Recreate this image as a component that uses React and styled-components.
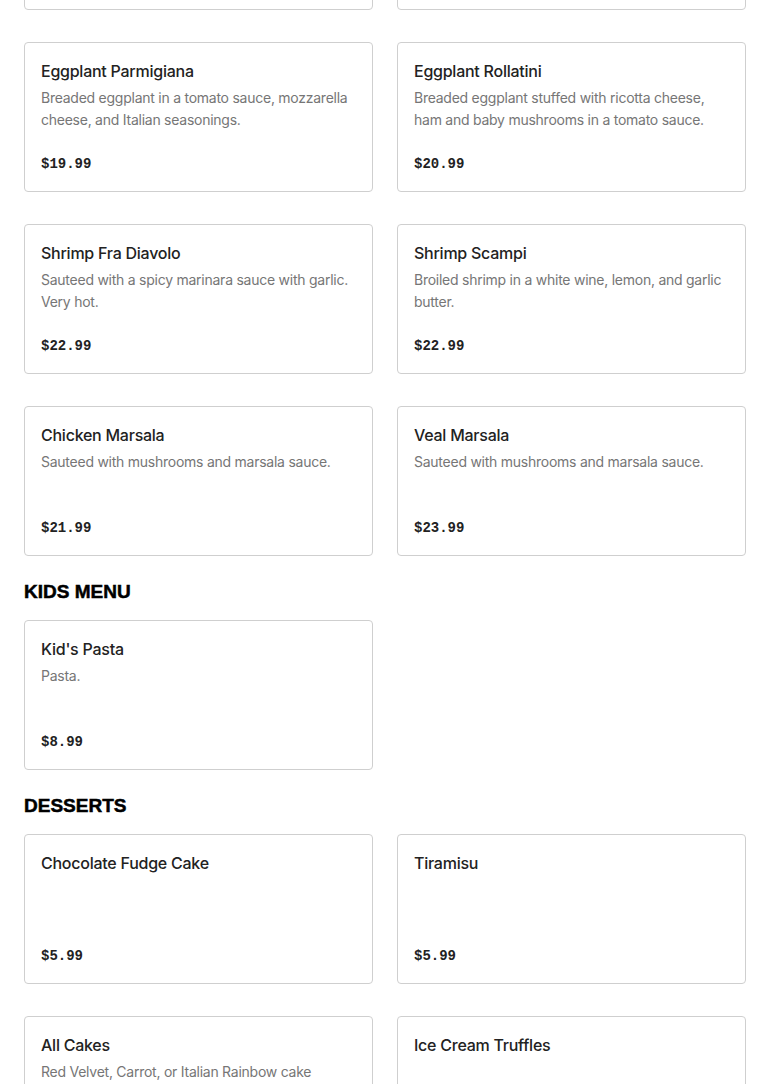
import React from "react";
import styled, { createGlobalStyle } from "styled-components";

const GlobalStyle = createGlobalStyle`
  html, body {
    margin: 0;
    padding: 0;
    background: #ffffff;
  }
  body {
    font-family: Inter, "Noto Sans", "Liberation Sans", sans-serif;
    color: #222222;
  }
`;

const StyledMenu = styled.main`
  padding: 0 24px;
  /* the page is photographed scrolled down, the first row is cut off */
  margin-top: -140px;
`;

const StyledSection = styled.section`
  & + & {
    margin-top: 24px;
  }
`;

const StyledHeading = styled.h2`
  margin: 0 0 16px;
  font-family: "Liberation Sans", Arial, sans-serif;
  font-weight: 900;
  font-size: 19px;
  line-height: 24px;
  color: #000000;
  -webkit-text-stroke: 0.5px #000000;
  text-transform: uppercase;
`;

const StyledGrid = styled.div`
  display: grid;
  grid-template-columns: repeat(2, 1fr);
  column-gap: 24px;
  row-gap: 32px;
`;

const StyledCard = styled.article`
  box-sizing: border-box;
  height: 150px;
  padding: 16px;
  border: 1px solid #cfcfcf;
  border-radius: 4px;
  display: flex;
  flex-direction: column;
`;

const StyledTitle = styled.h3`
  margin: 0 0 4px;
  font-size: 16px;
  line-height: 24px;
  font-weight: 500;
  letter-spacing: -0.25px;
  color: #222222;
`;

const StyledDescription = styled.p`
  margin: 0;
  font-size: 14px;
  line-height: 22px;
  letter-spacing: -0.25px;
  color: #767676;
`;

const StyledPrice = styled.span`
  margin-top: auto;
  padding-top: 1px;
  font-family: "Liberation Mono", "DejaVu Sans Mono", monospace;
  font-weight: 700;
  font-size: 14px;
  line-height: 21px;
  color: #222222;
`;

const sections = [
  {
    id: "entrees",
    items: [
      { name: "Lasagna", description: "Layers of pasta, meat sauce and ricotta cheese.", price: "18.99" },
      { name: "Baked Ziti", description: "Ziti baked with tomato sauce and mozzarella.", price: "17.99" },
      {
        name: "Eggplant Parmigiana",
        description: "Breaded eggplant in a tomato sauce, mozzarella cheese, and Italian seasonings.",
        price: "19.99"
      },
      {
        name: "Eggplant Rollatini",
        description: "Breaded eggplant stuffed with ricotta cheese, ham and baby mushrooms in a tomato sauce.",
        price: "20.99"
      },
      {
        name: "Shrimp Fra Diavolo",
        description: "Sauteed with a spicy marinara sauce with garlic. Very hot.",
        price: "22.99"
      },
      {
        name: "Shrimp Scampi",
        description: "Broiled shrimp in a white wine, lemon, and garlic butter.",
        price: "22.99"
      },
      { name: "Chicken Marsala", description: "Sauteed with mushrooms and marsala sauce.", price: "21.99" },
      { name: "Veal Marsala", description: "Sauteed with mushrooms and marsala sauce.", price: "23.99" }
    ]
  },
  {
    id: "kids",
    title: "Kids Menu",
    items: [{ name: "Kid's Pasta", description: "Pasta.", price: "8.99" }]
  },
  {
    id: "desserts",
    title: "Desserts",
    items: [
      { name: "Chocolate Fudge Cake", price: "5.99" },
      { name: "Tiramisu", price: "5.99" },
      { name: "All Cakes", description: "Red Velvet, Carrot, or Italian Rainbow cake", price: "6.99" },
      { name: "Ice Cream Truffles", price: "6.99" }
    ]
  }
];

const MenuCard = ({ name, description, price }) => (
  <StyledCard>
    <StyledTitle>{name}</StyledTitle>
    {description && <StyledDescription>{description}</StyledDescription>}
    <StyledPrice>${price}</StyledPrice>
  </StyledCard>
);

export default function App() {
  return (
    <>
      <GlobalStyle />
      <StyledMenu>
        {sections.map(section => (
          <StyledSection key={section.id}>
            {section.title && <StyledHeading>{section.title}</StyledHeading>}
            <StyledGrid>
              {section.items.map(item => (
                <MenuCard key={item.name} {...item} />
              ))}
            </StyledGrid>
          </StyledSection>
        ))}
      </StyledMenu>
    </>
  );
}
